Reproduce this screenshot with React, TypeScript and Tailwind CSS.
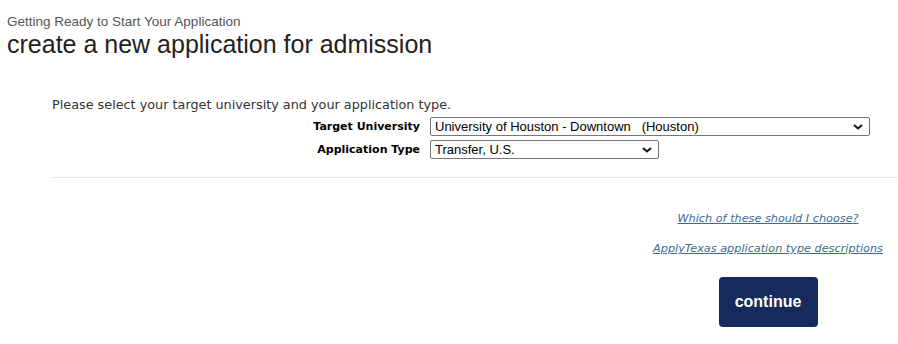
import { useState } from 'react';

const universities = [
  'University of Houston - Downtown\u00a0\u00a0\u00a0(Houston)',
  'University of Houston\u00a0\u00a0\u00a0(Houston)',
  'University of Texas at Austin\u00a0\u00a0\u00a0(Austin)',
];

const appTypes = ['Transfer, U.S.', 'Freshman, U.S.', 'Transfer, International'];

function Chevron() {
  return (
    <svg
      width="10"
      height="7"
      viewBox="0 0 10 7"
      className="pointer-events-none absolute right-[7px] top-1/2 -translate-y-1/2"
    >
      <path d="M1 1.5 L5 5 L9 1.5" fill="none" stroke="#111" strokeWidth="2" />
    </svg>
  );
}

function Select({ value, options, width, onChange }: { value: string; options: string[]; width: string; onChange: (v: string) => void }) {
  return (
    <div className={`relative ${width}`}>
      <select
        value={value}
        onChange={(e) => onChange(e.target.value)}
        className="block h-[19px] w-full appearance-none rounded-[2px] border border-[#767676] bg-white pl-[4px] pr-6 font-['Liberation_Sans',Arial,sans-serif] text-[13px] leading-[17px] text-black"
      >
        {options.map((o) => (
          <option key={o} value={o}>
            {o}
          </option>
        ))}
      </select>
      <Chevron />
    </div>
  );
}

export default function App() {
  const [uni, setUni] = useState(universities[0]);
  const [type, setType] = useState(appTypes[0]);

  return (
    <div className="min-h-[344px] w-[898px] bg-white pt-[14px]">
      {/* header */}
      <div className="pl-[7px] font-['Liberation_Sans',Arial,sans-serif]">
        <p className="text-[13.5px] leading-[16px] text-[#555]">Getting Ready to Start Your Application</p>
        <h1 className="text-[25px] leading-[28px] text-[#222]">create a new application for admission</h1>
      </div>

      {/* form */}
      <div className="ml-[52px] mt-[39px] font-['DejaVu_Sans',Verdana,sans-serif] text-[#333]">
        <p className="text-[12.8px] leading-[16px]">Please select your target university and your application type.</p>
        <div className="mt-[4px] grid grid-cols-[368px_auto] items-center gap-x-[10px] gap-y-[4px]">
          <label className="text-right text-[11px] font-bold leading-[19px] text-black">Target University</label>
          <Select value={uni} options={universities} width="w-[440px]" onChange={setUni} />
          <label className="text-right text-[11px] font-bold leading-[19px] text-black">Application Type</label>
          <Select value={type} options={appTypes} width="w-[229px]" onChange={setType} />
        </div>
        <div className="mt-[18px] h-px bg-[#e6e6e6]" />
      </div>

      {/* help links + continue */}
      <div className="ml-[638px] mt-[34px] flex w-[260px] flex-col items-center font-['DejaVu_Sans',Verdana,sans-serif] text-[11.25px] italic">
        <a href="#" className="leading-[14px] text-[#3a6a9a] underline">Which of these should I choose?</a>
        <a href="#" className="mt-[16px] leading-[14px] text-[#3a6a9a] underline">ApplyTexas application type descriptions</a>
        <button className="mt-[21px] h-[50px] w-[99px] rounded-[4px] bg-[#142b5c] font-['Liberation_Sans',Arial,sans-serif] text-[16px] font-bold not-italic text-white">
          continue
        </button>
      </div>
    </div>
  );
}
